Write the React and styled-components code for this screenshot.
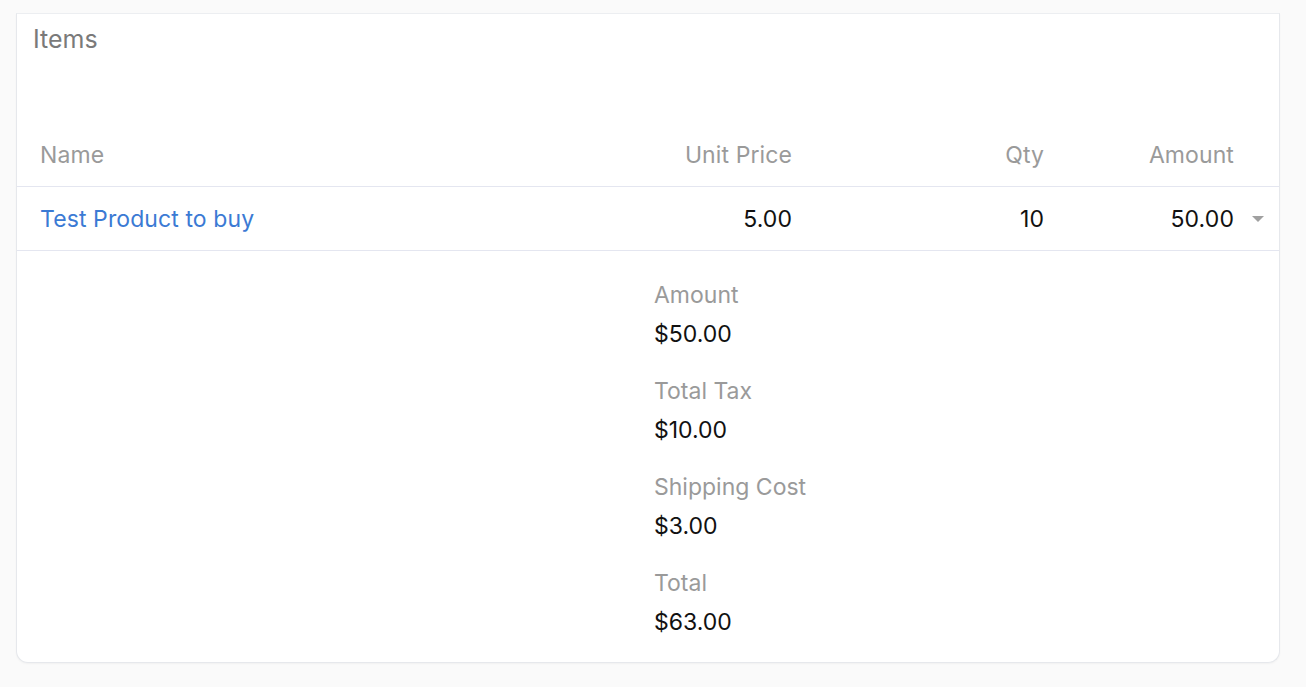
import React from 'react';
import styled, { createGlobalStyle } from 'styled-components';

const GlobalStyle = createGlobalStyle`
  html, body {
    margin: 0;
    padding: 0;
    background: #fafafa;
    font-family: Inter, "Noto Sans", sans-serif;
  }
`;

const Page = styled.div`
  padding: 13px 26px 24px 16px;
`;

const Card = styled.div`
  background: #fff;
  border: 1px solid #e6e8ec;
  border-top-color: #eceef1;
  border-radius: 0 0 12px 12px;
  box-shadow: 0 1px 2px rgba(0, 0, 0, 0.04);
  padding-bottom: 26px;
`;

const Title = styled.div`
  padding: 9px 16px 0;
  height: 100px;
  font-size: 25px;
  color: #7a7a7a;
  line-height: 32px;
`;

const Row = styled.div`
  display: grid;
  grid-template-columns: 1fr 250px 252px 190px 45px;
  align-items: center;
  height: 63px;
  border-bottom: 1px solid #e4e6f0;
  padding-left: 23px;
  font-size: 23px;
  letter-spacing: 0.1px;
  color: ${(p) => (p.head ? '#9a9a9a' : '#111')};
`;

const Cell = styled.div`
  text-align: ${(p) => (p.right ? 'right' : 'left')};
  color: ${(p) => (p.link ? '#3b7ad4' : 'inherit')};
`;

const Caret = styled.div`
  justify-self: center;
  margin-left: 2px;
  width: 0;
  height: 0;
  border-left: 6px solid transparent;
  border-right: 6px solid transparent;
  border-top: 6px solid #a0a0a0;
`;

const Summary = styled.div`
  display: grid;
  grid-template-columns: 1fr 1fr;
  padding-top: 30px;
`;

const Totals = styled.div`
  grid-column: 2;
  padding-left: 6px;
  display: flex;
  flex-direction: column;
  gap: 29px;
`;

const Field = styled.div`
  display: flex;
  flex-direction: column;
  gap: 11px;
  font-size: 23px;
  line-height: 28px;
`;

const Label = styled.div`
  color: #9a9a9a;
`;

const Value = styled.div`
  color: #111;
`;

const totals = [
  ['Amount', '$50.00'],
  ['Total Tax', '$10.00'],
  ['Shipping Cost', '$3.00'],
  ['Total', '$63.00'],
];

export default function App() {
  return (
    <>
      <GlobalStyle />
      <Page>
        <Card>
          <Title>Items</Title>
          <Row head>
            <Cell>Name</Cell>
            <Cell right>Unit Price</Cell>
            <Cell right>Qty</Cell>
            <Cell right>Amount</Cell>
            <div />
          </Row>
          <Row>
            <Cell link>Test Product to buy</Cell>
            <Cell right>5.00</Cell>
            <Cell right>10</Cell>
            <Cell right>50.00</Cell>
            <Caret />
          </Row>
          <Summary>
            <Totals>
              {totals.map(([label, value]) => (
                <Field key={label}>
                  <Label>{label}</Label>
                  <Value>{value}</Value>
                </Field>
              ))}
            </Totals>
          </Summary>
        </Card>
      </Page>
    </>
  );
}
